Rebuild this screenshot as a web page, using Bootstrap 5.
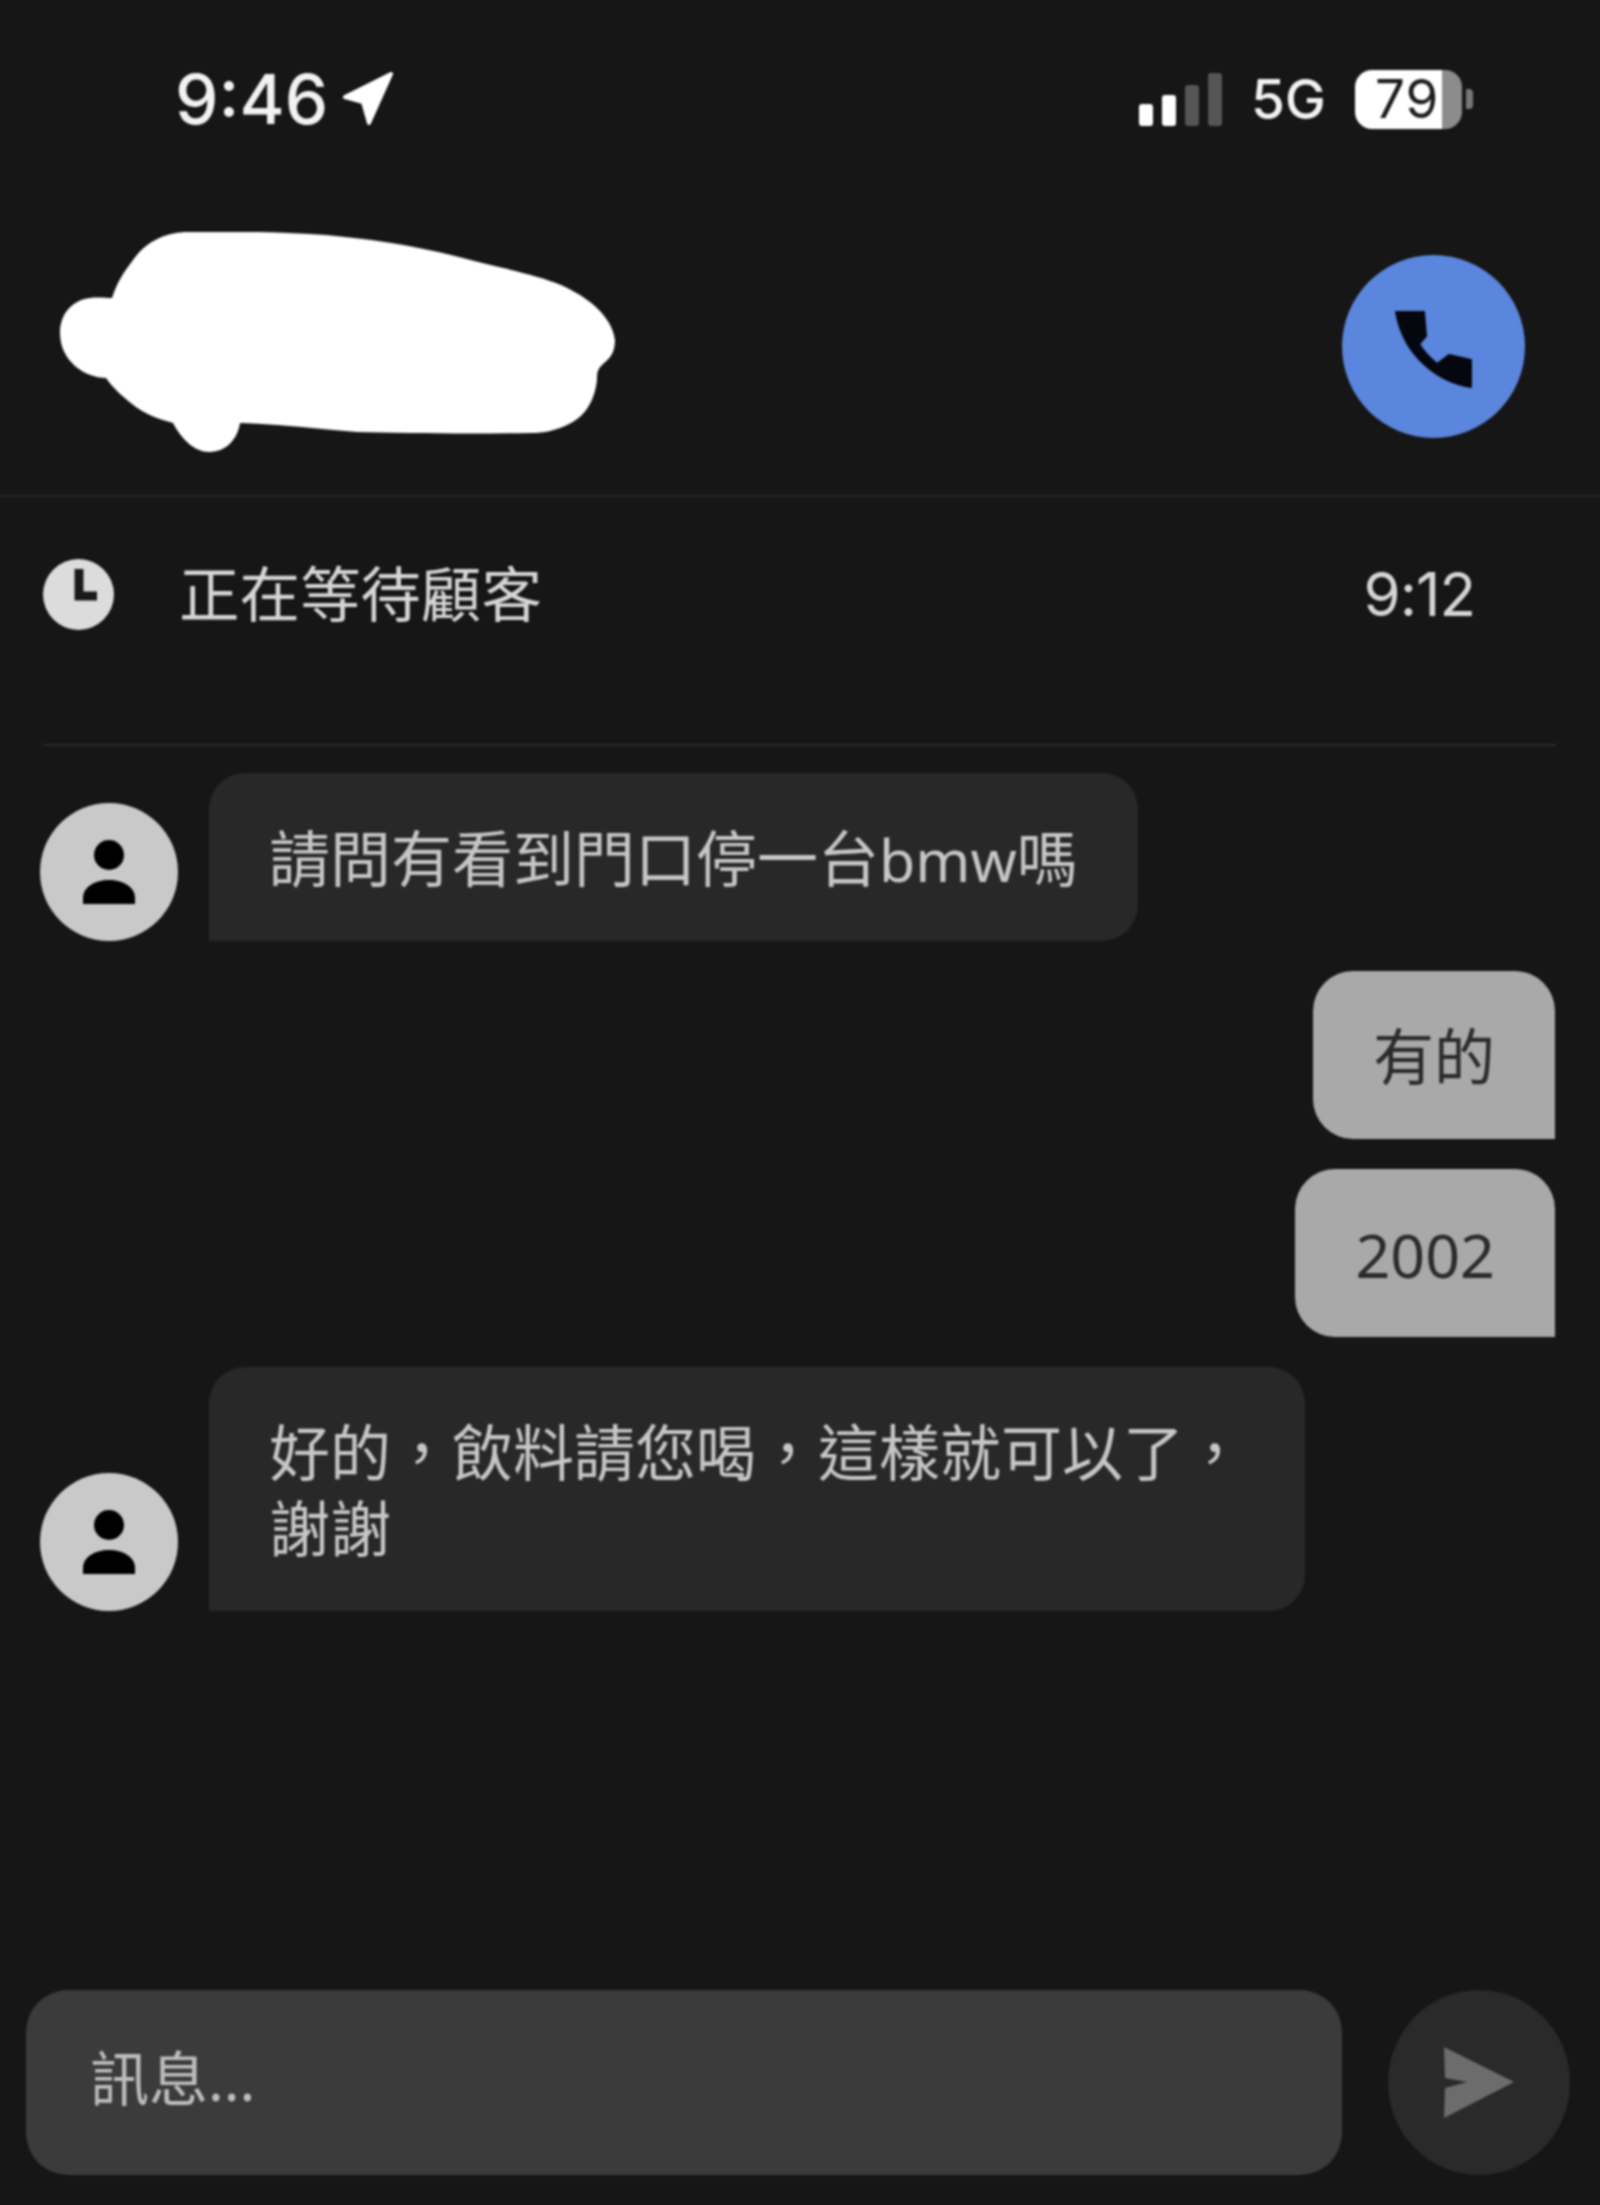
<!DOCTYPE html>
<html lang="zh-Hant">
<head>
    <meta charset="UTF-8">
    <meta name="viewport" content="width=device-width, initial-scale=1.0">
    <title>訊息</title>
    <link href="https://cdn.jsdelivr.net/npm/bootstrap@5.3.0/dist/css/bootstrap.min.css" rel="stylesheet">
    <style>
        body {
            background-color: #161616;
            font-family: "Noto Sans", "Noto Sans CJK TC", sans-serif;
        }
        .phone-screen { filter: blur(1px); }

        /* status bar */
        .status-bar { height: 198px; padding: 0 127px 0 175px; color: #f2f2f2; font-family: Inter, sans-serif; }
        .clock-time { font-size: 69px; font-weight: 500; line-height: 1; margin-right: 14px; }
        .signal-bars { gap: 9px; height: 53px; margin-right: 29px; }
        .signal-bars span { width: 14px; background: #555; border-radius: 3px; }
        .signal-bars .lit { background: #fff; }
        .net-type { font-size: 55px; font-weight: 500; line-height: 1; margin-right: 29px; }
        .battery-body {
            width: 107px; height: 59px; border-radius: 17px;
            background: linear-gradient(90deg, #fff 81%, #8c8c8c 81%);
            color: #1c1c1c; font-size: 53px; line-height: 59px;
            padding-left: 20px; letter-spacing: 1px;
        }
        .battery-nub { width: 7px; height: 20px; background: #777; border-radius: 0 4px 4px 0; margin-left: 4px; }

        /* contact header */
        .contact-head { height: 299px; padding: 0 75px 0 60px; border-bottom: 2px solid #272727; }
        .name-cover { margin-top: -9px; }
        .call-btn { width: 183px; height: 183px; background: #5b86dd; }

        /* waiting row */
        .wait-row { height: 194px; padding: 0 125px 0 43px; margin-bottom: 53px; color: #d6d6d6; font-size: 60.5px; line-height: 1; }
        .wait-label { margin-left: 65px; }
        .wait-time { font-family: Inter, sans-serif; font-size: 60px; letter-spacing: -1px; }
        .thread-rule { height: 2px; margin: 0 44px 0 43px; background: #2a2a2a; }

        /* messages */
        .thread { padding: 27px 45px 0 40px; gap: 30px; }
        .avatar-dot { width: 138px; height: 138px; background: #c9c9c9; margin-right: 31px; }
        .msg-bubble {
            padding: 48px 60px 44px; font-size: 61px; line-height: 76px; white-space: nowrap;
        }
        .msg-latin { font-size: 59px; }
        .msg-in { background: #282828; color: #c6c6c6; border-radius: 36px 36px 36px 0; }
        .msg-out { background: #a9a9a9; color: #2b2b2b; border-radius: 40px 40px 0 40px; }

        /* composer */
        .composer { padding: 0 30px 30px 26px; gap: 46px; }
        .composer .form-control {
            height: 185px; padding: 0 64px 10px; border: 0; border-radius: 42px;
            background: #3b3b3b; color: #c0c0c0; font-size: 59px; box-shadow: none;
        }
        .composer .form-control::placeholder { color: #bdbdbd; opacity: 1; }
        .send-btn { width: 182px; height: 185px; background: #2a2a2a; flex: none; }
    </style>
</head>
<body>

<div class="phone-screen d-flex flex-column vh-100">

    <!-- status bar -->
    <div class="status-bar d-flex align-items-center justify-content-between flex-shrink-0">
        <div class="d-flex align-items-center">
            <span class="clock-time">9:46</span>
            <svg width="51" height="54" viewBox="0 0 51 54"><path d="M49 2 L3 25 L21 30 L27 51 Z" fill="#fff" stroke="#fff" stroke-width="4" stroke-linejoin="round"/></svg>
        </div>
        <div class="d-flex align-items-center">
            <div class="signal-bars d-flex align-items-end">
                <span class="lit" style="height: 22px"></span>
                <span class="lit" style="height: 31px"></span>
                <span style="height: 41px"></span>
                <span style="height: 53px"></span>
            </div>
            <span class="net-type">5G</span>
            <div class="battery-body">79</div>
            <div class="battery-nub"></div>
        </div>
    </div>

    <!-- contact name (covered) and call button -->
    <div class="contact-head d-flex align-items-center justify-content-between flex-shrink-0">
        <svg class="name-cover" width="555" height="220" viewBox="0 0 555 220"><path fill="#fff" d="M125 0 C175 -1 225 0 266 3 C320 8 360 15 399 25 C440 36 475 42 501 53 C530 66 552 85 555 108 C555 118 552 125 543 132 C537 137 537 142 537 148 C535 165 528 182 511 191 C495 200 480 201 470 201 C400 202 340 201 297 200 C250 196 215 192 180 191 C178 205 168 220 149 220 C135 220 122 208 113 191 C100 187 85 183 72 172 C62 164 52 155 46 146 C26 146 0 130 0 101 C0 82 12 68 30 66 C38 65 46 66 52 66 C57 50 64 40 73 28 C84 12 102 1 125 0 Z"/></svg>
        <button type="button" class="call-btn btn rounded-circle d-flex align-items-center justify-content-center p-0 border-0" aria-label="call">
            <svg width="130" height="130" viewBox="0 0 130 130"><path fill="#05070f" stroke="#05070f" stroke-width="2" stroke-linejoin="round" d="M27 30 L55 30 L57 54 L50 62 C55 70 62 77 68 82 L80 73 L102 78 L102 105 C70 100 35 75 27 30 Z"/></svg>
        </button>
    </div>

    <!-- waiting state -->
    <div class="wait-row d-flex align-items-center flex-shrink-0">
        <svg width="71" height="71" viewBox="0 0 71 71"><circle cx="35.5" cy="35.5" r="35.5" fill="#dcdcdc"/><path d="M36 10 V37 H54" fill="none" stroke="#1a1a1a" stroke-width="9"/></svg>
        <span class="wait-label">正在等待顧客</span>
        <span class="wait-time ms-auto">9:12</span>
    </div>
    <div class="thread-rule flex-shrink-0"></div>

    <!-- messages -->
    <div class="thread d-flex flex-column flex-grow-1">
        <div class="d-flex align-items-end">
            <div class="avatar-dot rounded-circle flex-shrink-0 d-flex align-items-center justify-content-center">
                <svg width="52" height="64" viewBox="0 0 52 64"><circle cx="26" cy="15" r="15" fill="#000"/><path fill="#000" d="M0 64 V58 C0 47 12 40 26 40 C40 40 52 47 52 58 V64 Z"/></svg>
            </div>
            <div class="msg-bubble msg-in">請問有看到門口停一台<span class="msg-latin">bmw</span>嗎</div>
        </div>
        <div class="d-flex justify-content-end">
            <div class="msg-bubble msg-out">有的</div>
        </div>
        <div class="d-flex justify-content-end">
            <div class="msg-bubble msg-out">2002</div>
        </div>
        <div class="d-flex align-items-end">
            <div class="avatar-dot rounded-circle flex-shrink-0 d-flex align-items-center justify-content-center">
                <svg width="52" height="64" viewBox="0 0 52 64"><circle cx="26" cy="15" r="15" fill="#000"/><path fill="#000" d="M0 64 V58 C0 47 12 40 26 40 C40 40 52 47 52 58 V64 Z"/></svg>
            </div>
            <div class="msg-bubble msg-in">好的，飲料請您喝，這樣就可以了，<br>謝謝</div>
        </div>
    </div>

    <!-- composer -->
    <form class="composer d-flex align-items-center flex-shrink-0">
        <input type="text" class="form-control flex-grow-1" placeholder="訊息...">
        <button type="button" class="send-btn btn rounded-circle d-flex align-items-center justify-content-center p-0 border-0" aria-label="send">
            <svg width="70" height="72" viewBox="0 0 70 72"><path fill="#6c6c6c" d="M0 0 L70 35 L0 71 L1 41 L23 35 L1 31 Z"/></svg>
        </button>
    </form>
</div>

<script src="https://cdn.jsdelivr.net/npm/bootstrap@5.3.0/dist/js/bootstrap.bundle.min.js"></script>
</body>
</html>
